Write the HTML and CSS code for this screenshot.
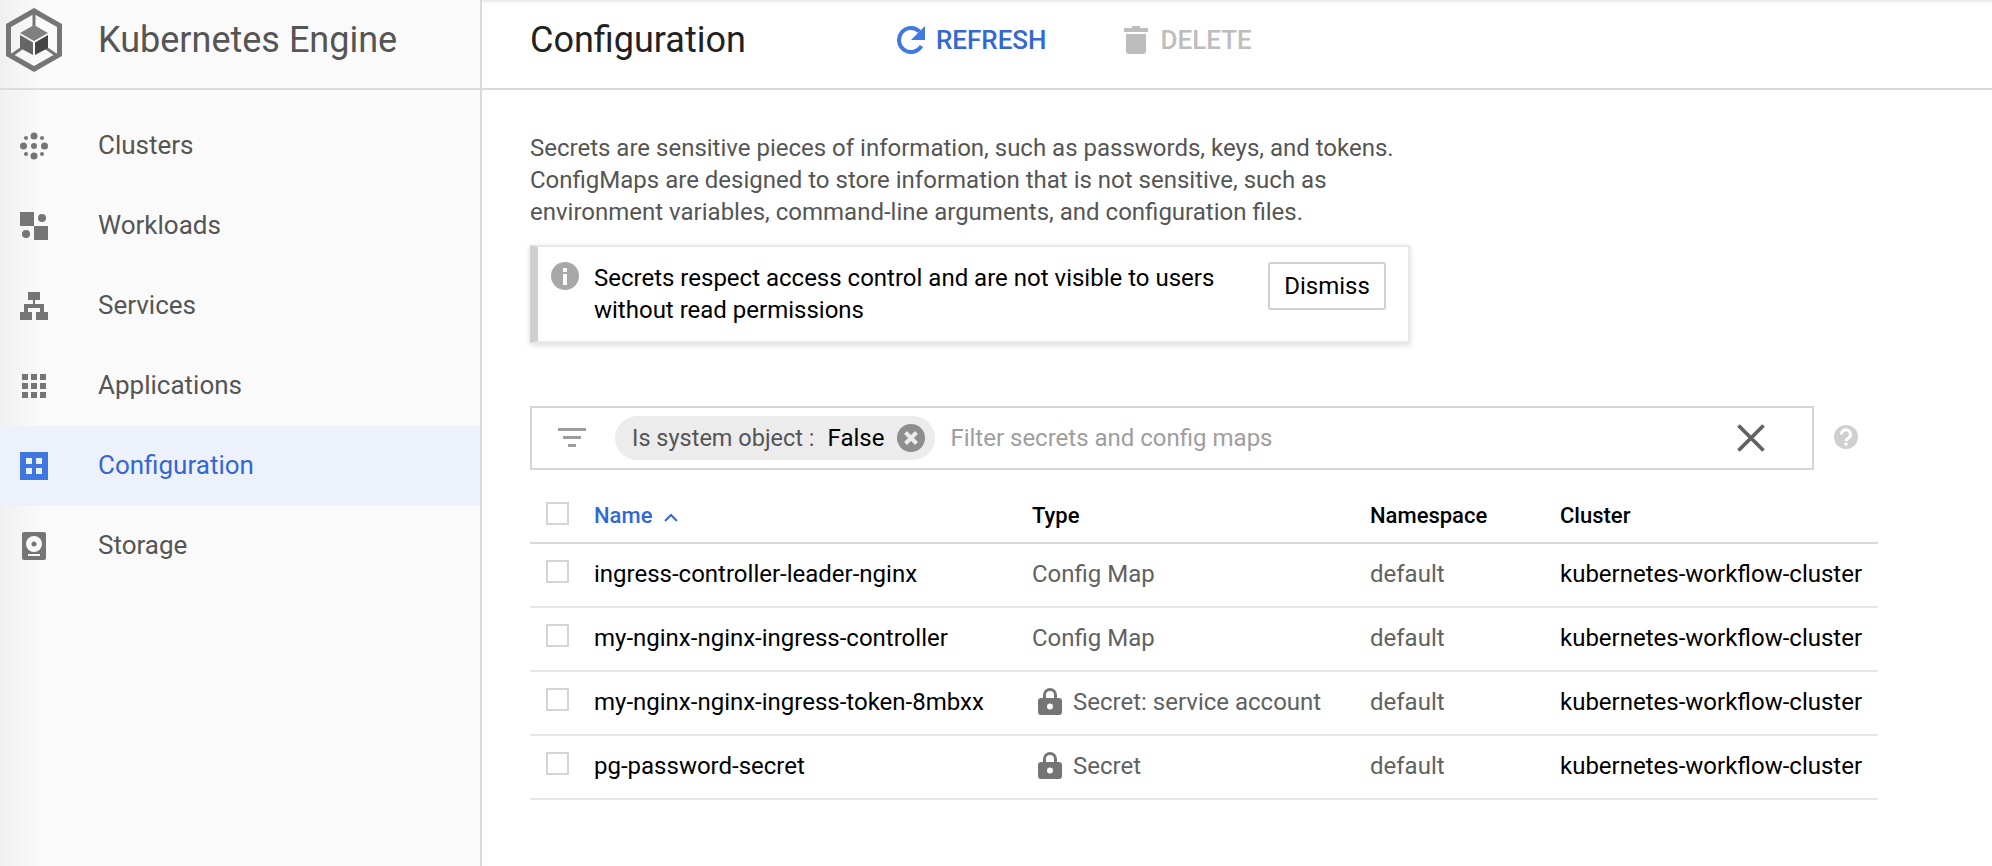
FILE: index.html
```html
<!DOCTYPE html>
<html lang="en">
<head>
  <meta charset="UTF-8" />
  <title>Configuration - Kubernetes Engine</title>
  <link rel="stylesheet" href="styles.css">
</head>
<body>

<div class="app">
  <aside class="sidebar">
    <div class="brand">
      <svg class="brand-logo" viewBox="0 0 56 64">
        <path fill="#757575" fill-rule="evenodd" d="M28 0 56 16V48L28 64 0 48V16ZM28 6 5 19V45L28 58 51 45V19Z"/>
        <path fill="none" stroke="#757575" stroke-width="3" d="M28 5V20M6 47 16 40M50 47 40 40"/>
        <path fill="#808080" d="M28 17 42 25 28 33 14 25Z"/>
        <path fill="#666" d="M14 27 27 34.500V47L14 40Z"/>
        <path fill="#444" d="M42 27 29 34.500V47L42 40Z"/>
      </svg>
      <span class="brand-name">Kubernetes Engine</span>
    </div>
    <nav class="nav">
      <a class="nav-item">
        <svg class="nav-icon" viewBox="0 0 28 28" fill="#757575">
          <circle cx="14" cy="14" r="3"/><circle cx="14" cy="4" r="3.500"/><circle cx="14" cy="24" r="3.500"/><circle cx="3.500" cy="14" r="3.500"/><circle cx="24.500" cy="14" r="3.500"/><circle cx="6" cy="6" r="2"/><circle cx="22" cy="6" r="2"/><circle cx="6" cy="22" r="2"/><circle cx="22" cy="22" r="2"/>
        </svg>
        Clusters
      </a>
      <a class="nav-item">
        <svg class="nav-icon" viewBox="0 0 28 28" fill="#757575">
          <rect width="14" height="14"/><rect x="14" y="14" width="14" height="14"/><circle cx="22" cy="6" r="4"/><circle cx="6" cy="22" r="4"/>
        </svg>
        Workloads
      </a>
      <a class="nav-item">
        <svg class="nav-icon" viewBox="0 0 28 28" fill="#757575">
          <path d="M8 0H20V8H15V12H24V20H28V28H16V20H20V16H8V20H12V28H0V20H4V12H13V8H8Z"/>
        </svg>
        Services
      </a>
      <a class="nav-item">
        <svg class="nav-icon" viewBox="0 0 28 28" fill="#757575">
          <rect x="2" y="2" width="6" height="6"/><rect x="11" y="2" width="6" height="6"/><rect x="20" y="2" width="6" height="6"/>
          <rect x="2" y="11" width="6" height="6"/><rect x="11" y="11" width="6" height="6"/><rect x="20" y="11" width="6" height="6"/>
          <rect x="2" y="20" width="6" height="6"/><rect x="11" y="20" width="6" height="6"/><rect x="20" y="20" width="6" height="6"/>
        </svg>
        Applications
      </a>
      <a class="nav-item active">
        <svg class="nav-icon" viewBox="0 0 28 28">
          <rect width="28" height="28" fill="#3f78e0"/>
          <g fill="#edf1fa"><rect x="6" y="6" width="6" height="6"/><rect x="16" y="6" width="6" height="6"/><rect x="6" y="16" width="6" height="6"/><rect x="16" y="16" width="6" height="6"/></g>
        </svg>
        Configuration
      </a>
      <a class="nav-item">
        <svg class="nav-icon" viewBox="0 0 28 28">
          <rect x="2" width="24" height="28" rx="2" fill="#757575"/>
          <circle cx="14" cy="12" r="8" fill="#fafafa"/><circle cx="14" cy="12" r="2.500" fill="#757575"/>
          <rect x="8" y="22" width="12" height="2" fill="#fafafa"/>
        </svg>
        Storage
      </a>
    </nav>
  </aside>

  <main class="main">
    <header class="toolbar">
      <h1 class="page-title">Configuration</h1>
      <button class="action refresh">
        <svg viewBox="0 0 28 28" width="28" height="28">
          <path fill="none" stroke="#3f78e0" stroke-width="4" d="M24.400 20A12 12 0 1 1 22.500 5.500"/>
          <path fill="#3f78e0" d="M28 0V14H14Z"/>
        </svg>
        REFRESH
      </button>
      <button class="action delete">
        <svg viewBox="0 0 24 28" width="24" height="28">
          <path fill="#bdbdbd" d="M8 0H16V2H24V6H0V2H8ZM2 8H22V25Q22 28 19 28H5Q2 28 2 25Z"/>
        </svg>
        DELETE
      </button>
    </header>

    <section class="content">
      <p class="intro">Secrets are sensitive pieces of information, such as passwords, keys, and tokens.<br>ConfigMaps are designed to store information that is not sensitive, such as<br>environment variables, command-line arguments, and configuration files.</p>

      <div class="notice">
        <svg class="notice-icon" viewBox="0 0 28 28">
          <circle cx="14" cy="14" r="14" fill="#a8a8a8"/>
          <rect x="12" y="6" width="4" height="4" fill="#fff"/><rect x="12" y="12" width="4" height="11" fill="#fff"/>
        </svg>
        <div class="notice-text">Secrets respect access control and are not visible to users<br>without read permissions</div>
        <button class="dismiss">Dismiss</button>
      </div>

      <div class="filter-row">
        <div class="filter">
          <svg class="filter-icon" viewBox="0 0 28 20" fill="#9e9e9e">
            <rect width="28" height="3"/><rect x="5" y="8" width="18" height="3"/><rect x="10" y="16" width="8" height="3"/>
          </svg>
          <span class="chip">
            <span class="chip-key">Is system object :</span>
            <span class="chip-value">False</span>
            <svg class="chip-close" viewBox="0 0 28 28">
              <circle cx="14" cy="14" r="14" fill="#8e8e8e"/>
              <path stroke="#ececec" stroke-width="4" d="M8.500 8.500 19.500 19.500M19.500 8.500 8.500 19.500"/>
            </svg>
          </span>
          <span class="filter-placeholder">Filter secrets and config maps</span>
          <svg class="filter-clear" viewBox="0 0 24 24">
            <path stroke="#616161" stroke-width="3" d="M2 2 22 22M22 2 2 22"/>
          </svg>
        </div>
        <svg class="help-icon" viewBox="0 0 24 24">
          <circle cx="12" cy="12" r="12" fill="#cfcfcf"/>
          <path fill="none" stroke="#fff" stroke-width="3" d="M7.500 9.500A4.500 4.500 0 1 1 14.500 13Q12 14.500 12 16"/>
          <rect x="10.500" y="17.500" width="3" height="3" fill="#fff"/>
        </svg>
      </div>

      <table class="list">
        <thead>
          <tr>
            <th class="col-check"><span class="check"></span></th>
            <th class="col-name sorted">Name
              <svg class="sort-icon" viewBox="0 0 16 10"><path fill="none" stroke="#3367d6" stroke-width="2" d="M2 8 8 2 14 8"/></svg>
            </th>
            <th class="col-type">Type</th>
            <th class="col-ns">Namespace</th>
            <th>Cluster</th>
          </tr>
        </thead>
        <tbody>
          <tr>
            <td><span class="check"></span></td>
            <td>ingress-controller-leader-nginx</td>
            <td class="muted">Config Map</td>
            <td class="muted">default</td>
            <td>kubernetes-workflow-cluster</td>
          </tr>
          <tr>
            <td><span class="check"></span></td>
            <td>my-nginx-nginx-ingress-controller</td>
            <td class="muted">Config Map</td>
            <td class="muted">default</td>
            <td>kubernetes-workflow-cluster</td>
          </tr>
          <tr>
            <td><span class="check"></span></td>
            <td>my-nginx-nginx-ingress-token-8mbxx</td>
            <td class="muted">
              <span class="secret">
                <svg class="lock" viewBox="0 0 24 28"><path fill="#757575" fill-rule="evenodd" d="M5 11V8A7 7 0 0 1 19 8V11H21Q24 11 24 14V25Q24 28 21 28H3Q0 28 0 25V14Q0 11 3 11ZM8 11H16V8A4 4 0 0 0 8 8ZM12 16.500A3 3 0 1 0 12 22.500 3 3 0 1 0 12 16.500Z"/></svg>
                Secret: service account
              </span>
            </td>
            <td class="muted">default</td>
            <td>kubernetes-workflow-cluster</td>
          </tr>
          <tr>
            <td><span class="check"></span></td>
            <td>pg-password-secret</td>
            <td class="muted">
              <span class="secret">
                <svg class="lock" viewBox="0 0 24 28"><path fill="#757575" fill-rule="evenodd" d="M5 11V8A7 7 0 0 1 19 8V11H21Q24 11 24 14V25Q24 28 21 28H3Q0 28 0 25V14Q0 11 3 11ZM8 11H16V8A4 4 0 0 0 8 8ZM12 16.500A3 3 0 1 0 12 22.500 3 3 0 1 0 12 16.500Z"/></svg>
                Secret
              </span>
            </td>
            <td class="muted">default</td>
            <td>kubernetes-workflow-cluster</td>
          </tr>
        </tbody>
      </table>
    </section>
  </main>
</div>

</body>
</html>
```

FILE: styles.css
```css
html, body {
  height: 100%;
}

body {
  margin: 0;
  font-family: Roboto, sans-serif;
  color: #000;
  background: #fff;
  overflow: hidden;
}

.app {
  display: flex;
  height: 866px;
  background: linear-gradient(to bottom, #e8e8e8 0, rgba(255, 255, 255, 0) 4px);
}

/* sidebar */

.sidebar {
  width: 480px;
  flex: none;
  border-right: 2px solid #d9d9d9;
  background: linear-gradient(to right, #f0f0f0 0, #fafafa 40px);
}

.brand {
  display: flex;
  align-items: center;
  height: 80px;
  padding: 0 0 8px 6px;
  border-bottom: 2px solid #dcdcdc;
}

.brand-logo {
  width: 56px;
  height: 64px;
  flex: none;
  margin-right: 36px;
}

.brand-name {
  font-size: 36px;
  color: #555;
}

.nav {
  padding-top: 16px;
}

.nav-item {
  display: flex;
  align-items: center;
  height: 78px;
  padding: 0 0 2px 20px;
  font-size: 26px;
  color: #555;
}

.nav-item.active {
  background: #edf1fa;
  color: #3367d6;
}

.nav-icon {
  width: 28px;
  height: 28px;
  flex: none;
  margin: 2px 50px 0 0;
}

/* toolbar */

.main {
  flex: 1;
  min-width: 0;
}

.toolbar {
  display: flex;
  align-items: center;
  height: 80px;
  padding: 0 0 8px 48px;
  border-bottom: 2px solid #d9d9d9;
}

.page-title {
  margin: 0 151px 0 0;
  font-size: 36px;
  font-weight: 400;
  color: #212121;
}

.action {
  display: flex;
  align-items: center;
  gap: 11px;
  padding: 0;
  border: none;
  background: none;
  font-family: inherit;
  font-size: 26px;
  font-weight: 500;
}

.refresh {
  color: #3367d6;
  margin-right: 77px;
}

.delete {
  gap: 13px;
  color: #bdbdbd;
}

/* content */

.content {
  padding: 42px 0 0 48px;
  width: 1348px;
}

.intro {
  margin: 0;
  font-size: 24px;
  line-height: 32px;
  color: #555;
}

.notice {
  display: flex;
  width: 880px;
  height: 98px;
  box-sizing: border-box;
  margin-top: 17px;
  padding: 15px 22px 0 13px;
  border: 2px solid #e8e8e8;
  border-left: 8px solid #cfcfcf;
  box-shadow: 0 2px 6px rgba(0, 0, 0, 0.15);
  font-size: 24px;
  line-height: 32px;
}

.notice-icon {
  width: 28px;
  height: 28px;
  flex: none;
  margin-right: 15px;
}

.notice-text {
  flex: 1;
}

.dismiss {
  width: 118px;
  height: 48px;
  padding: 0;
  border: 2px solid #d0d0d0;
  border-radius: 3px;
  background: #fff;
  font-family: inherit;
  font-size: 24px;
  color: #000;
}

/* filter */

.filter-row {
  display: flex;
  align-items: center;
  margin-top: 63px;
}

.filter {
  display: flex;
  align-items: center;
  width: 1284px;
  height: 64px;
  box-sizing: border-box;
  border: 2px solid #d5d5d5;
  padding-left: 26px;
}

.filter-icon {
  width: 28px;
  height: 20px;
  flex: none;
  margin-right: 29px;
}

.chip {
  display: flex;
  align-items: center;
  height: 44px;
  padding: 0 10px 0 17px;
  border-radius: 22px;
  background: #ececec;
  font-size: 24px;
}

.chip-key {
  font-size: 23.5px;
  color: #555;
  margin-right: 13px;
}

.chip-value {
  margin-right: 13px;
}

.chip-close {
  width: 28px;
  height: 28px;
}

.filter-placeholder {
  flex: 1;
  margin-left: 15px;
  font-size: 24px;
  color: #9e9e9e;
}

.filter-clear {
  width: 30px;
  height: 30px;
  flex: none;
  margin-right: 46px;
}

.help-icon {
  width: 24px;
  height: 24px;
  flex: none;
  margin: 0 0 3px 20px;
}

/* table */

.list {
  width: 100%;
  margin-top: 9px;
  border-collapse: collapse;
  table-layout: fixed;
  font-size: 24px;
}

.list th {
  height: 49px;
  padding: 0 0 14px;
  text-align: left;
  vertical-align: bottom;
  font-size: 22px;
  font-weight: 500;
  border-bottom: 2px solid #d9d9d9;
}

.list th.col-check {
  padding: 11px 0 0;
  vertical-align: middle;
}

.list td {
  height: 60px;
  padding: 0 0 2px;
  border-bottom: 2px solid #e6e6e6;
}

.col-check {
  width: 64px;
}

.col-type {
  width: 338px;
}

.col-name {
  width: 438px;
}

.col-ns {
  width: 190px;
}

.sorted {
  color: #3367d6;
}

.sort-icon {
  width: 16px;
  height: 10px;
  margin-left: 5px;
}

.muted {
  color: #616161;
}

.check {
  display: block;
  width: 19px;
  height: 19px;
  margin: 0 0 5px 16px;
  border: 2px solid #d5d5d5;
}

.secret {
  display: flex;
  align-items: center;
  gap: 11px;
  padding-left: 6px;
}

.lock {
  width: 24px;
  height: 28px;
  margin-top: -2px;
}
```
